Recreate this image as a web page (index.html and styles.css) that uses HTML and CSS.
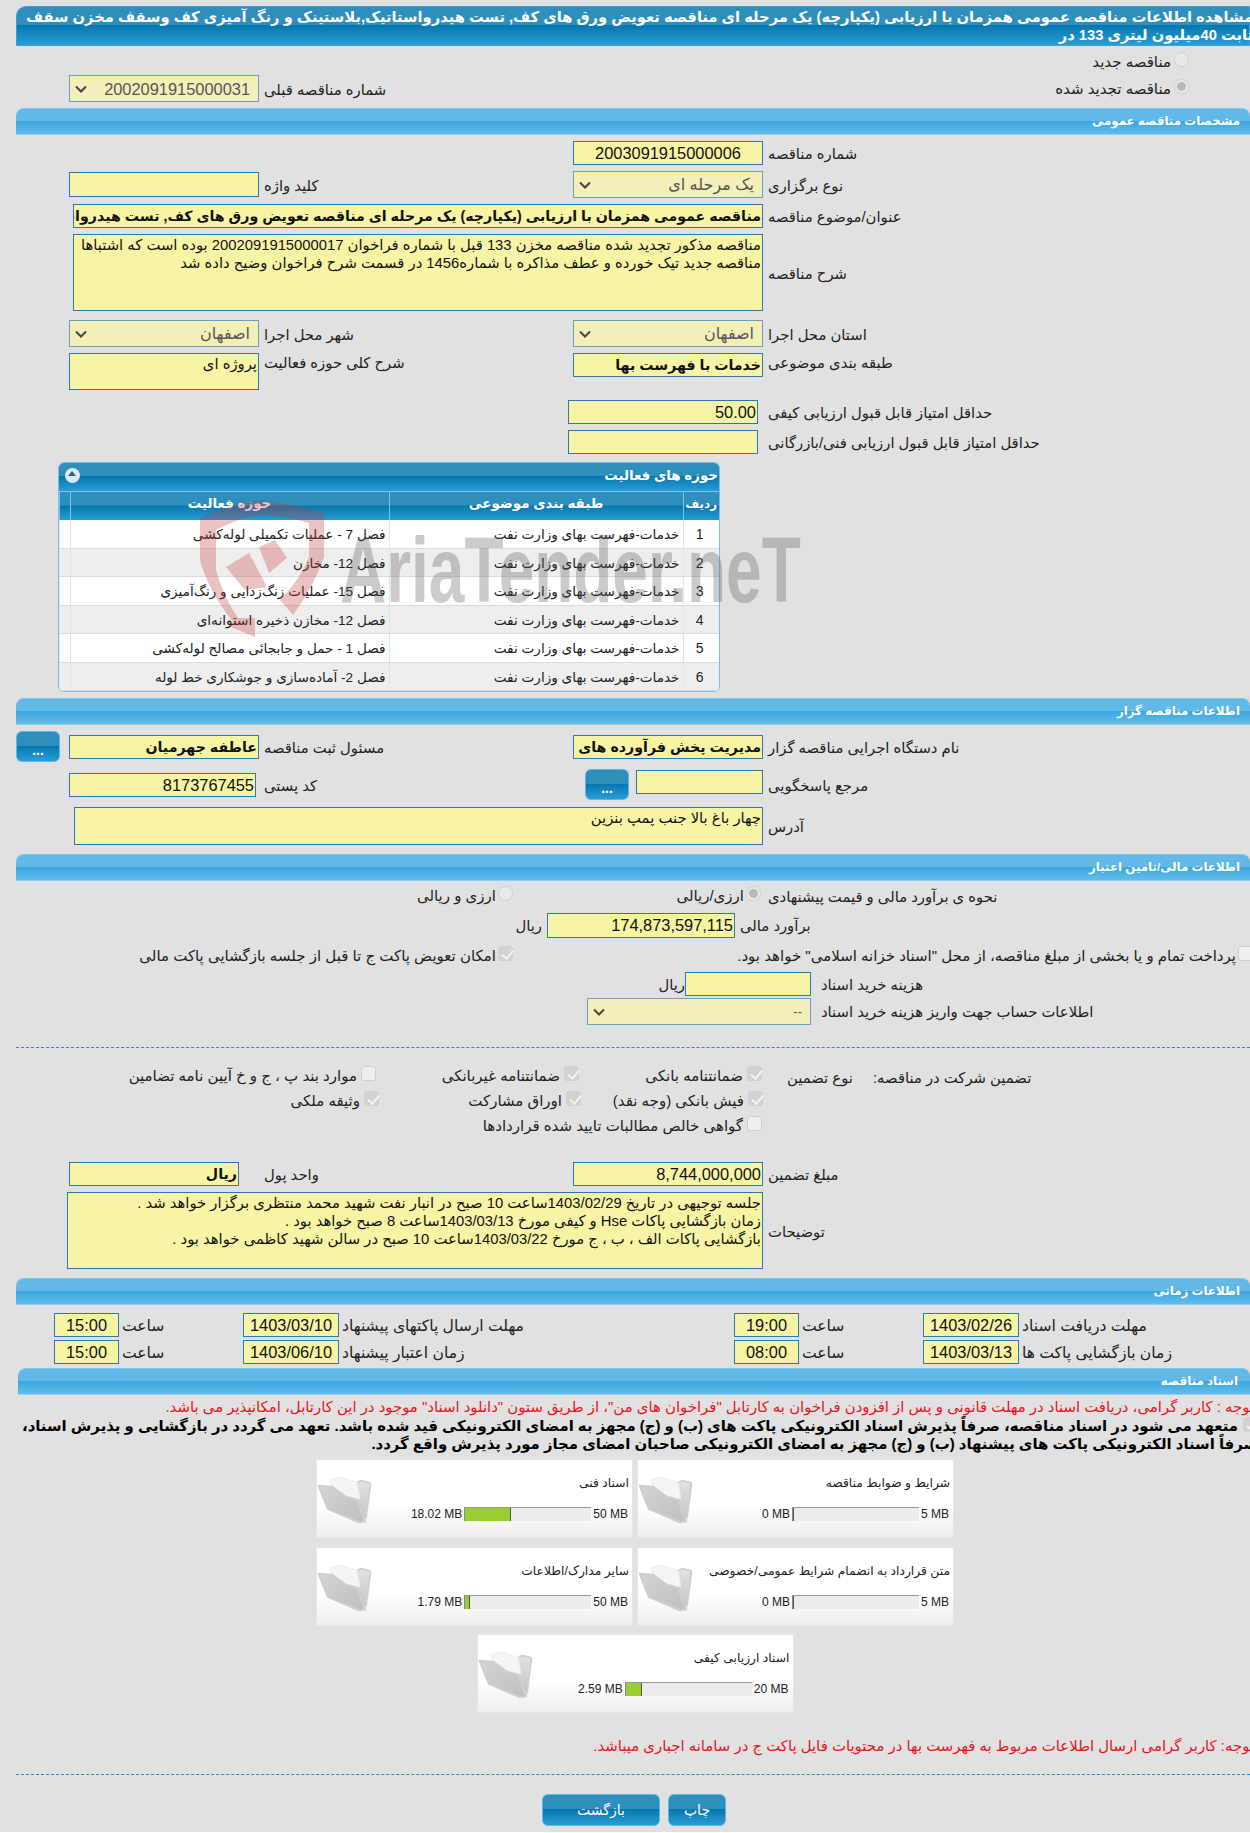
FILE: index.html
```html
<!DOCTYPE html>
<html lang="fa">

<head>
    <meta charset="UTF-8">
    <title>مشاهده اطلاعات مناقصه</title>

    <link rel="stylesheet" href="styles.css">

</head>

<body>

    <svg class="defs" width="0" height="0">
        <defs>
            <linearGradient id="folderBack" x1="0" y1="0" x2="0" y2="1">
                <stop offset="0" stop-color="#e2e2e2" />
                <stop offset="1" stop-color="#c6c6c6" />
            </linearGradient>
            <linearGradient id="folderFront" x1="0" y1="0" x2="1" y2="1">
                <stop offset="0" stop-color="#d4d4d4" />
                <stop offset="1" stop-color="#bfbfbf" />
            </linearGradient>
            <symbol id="folder" viewBox="0 0 70 60">
                <g transform="translate(0 0.8) scale(1 0.885)">
                    <path d="M40 15 L46 11 L54 13 Q56 14 55 18 L51 53 L44 50 Z" fill="url(#folderBack)" stroke="#d0d0d0" stroke-width="2" stroke-linejoin="round" />
                    <path d="M15 10 L25 7 L42 13 L45 32 L30 28 L17 18 Z" fill="#f5f5f5" stroke="#ececec" stroke-linejoin="round" />
                    <path d="M4 17 L17 18 L30 29 L42 33 L50 57 L44 58 L13 43 Z" fill="url(#folderFront)" stroke="#cecece" stroke-width="2.5" stroke-linejoin="round" />
                </g>
            </symbol>
            <symbol id="chevron" viewBox="0 0 12 8">
                <path d="M1 1.5 L6 6.5 L11 1.5" fill="none" stroke="#444" stroke-width="2" />
            </symbol>
        </defs>
    </svg>

    <div class="page">

        <h1 class="title"><span>مشاهده اطلاعات مناقصه عمومی همزمان با ارزیابی (یکپارچه) یک مرحله ای مناقصه تعویض ورق های کف, تست هیدرواستاتیک,بلاستینک و رنگ آمیزی کف وسقف مخزن سقف<br>ثابت 40میلیون لیتری 133 در</span></h1>

        <div class="row top-radio">
            <div class="opt col5"><i class="radio"></i><label>مناقصه جدید</label></div>
        </div>
        <div class="row mt3">
            <div class="field select col2"><svg><use href="#chevron" /></svg><span class="num">2002091915000031</span></div>
            <div class="label col3">شماره مناقصه قبلی</div>
            <div class="opt col5"><i class="radio on"></i><label>مناقصه تجدید شده</label></div>
        </div>

        <div class="bar">مشخصات مناقصه عمومی</div>

        <div class="row">
            <div class="field col4 center num">2003091915000006</div>
            <div class="label col5">شماره مناقصه</div>
        </div>
        <div class="row">
            <div class="field col2 low"></div>
            <div class="label col3">کلید واژه</div>
            <div class="field select col4"><svg><use href="#chevron" /></svg><span>یک مرحله ای</span></div>
            <div class="label col5">نوع برگزاری</div>
        </div>
        <div class="row">
            <div class="field wide bold">مناقصه عمومی همزمان با ارزیابی (یکپارچه) یک مرحله ای مناقصه تعویض ورق های کف, تست هیدرواستاتیک,بلاستینک و رنگ آمیزی کف وسقف مخزن</div>
            <div class="label col5">عنوان/موضوع مناقصه</div>
        </div>
        <div class="row">
            <div class="field area wide desc">مناقصه مذکور تجدید شده مناقصه مخزن 133 قبل با شماره فراخوان 2002091915000017 بوده است که اشتباها<br>مناقصه جدید تیک خورده و عطف مذاکره با شماره1456 در قسمت شرح فراخوان وضیح داده شد</div>
            <div class="label col5">شرح مناقصه</div>
        </div>
        <div class="row mt9">
            <div class="field select col2"><svg><use href="#chevron" /></svg><span>اصفهان</span></div>
            <div class="label col3">شهر محل اجرا</div>
            <div class="field select col4"><svg><use href="#chevron" /></svg><span>اصفهان</span></div>
            <div class="label col5">استان محل اجرا</div>
        </div>
        <div class="row row-top">
            <div class="field area col2 short">پروژه ای</div>
            <div class="label col3">شرح کلی حوزه فعالیت</div>
            <div class="field col4 bold">خدمات با فهرست بها</div>
            <div class="label col5">طبقه بندی موضوعی</div>
        </div>
        <div class="row score mt10">
            <div class="field col2 num">50.00</div>
            <div class="label col3">حداقل امتیاز قابل قبول ارزیابی کیفی</div>
        </div>
        <div class="row score">
            <div class="field col2"></div>
            <div class="label col3">حداقل امتیاز قابل قبول ارزیابی فنی/بازرگانی</div>
        </div>

        <section class="panel">
            <div class="panel-head">
                <span>حوزه های فعالیت</span>
                <i class="collapse"></i>
            </div>
            <table>
                <colgroup>
                    <col class="c-radif">
                    <col class="c-tabaghe">
                    <col class="c-hoze">
                    <col>
                </colgroup>
                <thead>
                    <tr>
                        <th>ردیف</th>
                        <th>طبقه بندی موضوعی</th>
                        <th>حوزه فعالیت</th>
                        <th></th>
                    </tr>
                </thead>
                <tbody>
                    <tr>
                        <td class="n">1</td>
                        <td>خدمات-فهرست بهای وزارت نفت</td>
                        <td>فصل 7 - عملیات تکمیلی لوله‌کشی</td>
                        <td></td>
                    </tr>
                    <tr>
                        <td class="n">2</td>
                        <td>خدمات-فهرست بهای وزارت نفت</td>
                        <td>فصل 12- مخازن</td>
                        <td></td>
                    </tr>
                    <tr>
                        <td class="n">3</td>
                        <td>خدمات-فهرست بهای وزارت نفت</td>
                        <td>فصل 15- عملیات زنگ‌زدایی و رنگ‌آمیزی</td>
                        <td></td>
                    </tr>
                    <tr>
                        <td class="n">4</td>
                        <td>خدمات-فهرست بهای وزارت نفت</td>
                        <td>فصل 12- مخازن ذخیره استوانه‌ای</td>
                        <td></td>
                    </tr>
                    <tr>
                        <td class="n">5</td>
                        <td>خدمات-فهرست بهای وزارت نفت</td>
                        <td>فصل 1 - حمل و جابجائی مصالح لوله‌کشی</td>
                        <td></td>
                    </tr>
                    <tr>
                        <td class="n">6</td>
                        <td>خدمات-فهرست بهای وزارت نفت</td>
                        <td>فصل 2- آماده‌سازی و جوشکاری خط لوله</td>
                        <td></td>
                    </tr>
                </tbody>
            </table>
        </section>

        <div class="bar mt6">اطلاعات مناقصه گزار</div>

        <div class="row mt6">
            <button class="btn btn-more col1">...</button>
            <div class="field col2 bold">عاطفه جهرمیان</div>
            <div class="label col3">مسئول ثبت مناقصه</div>
            <div class="field col4 bold">مدیریت پخش فرآورده های نفتی اصفهان</div>
            <div class="label col5">نام دستگاه اجرایی مناقصه گزار</div>
        </div>
        <div class="row mt7">
            <div class="field col2 w186 num">8173767455</div>
            <div class="label col3">کد پستی</div>
            <div class="ref col4">
                <button class="btn btn-more">...</button>
                <div class="field"></div>
            </div>
            <div class="label col5">مرجع پاسخگویی</div>
        </div>
        <div class="row mt7">
            <div class="field area wide addr">چهار باغ بالا جنب پمپ بنزین</div>
            <div class="label col5">آدرس</div>
        </div>

        <div class="bar mt9">اطلاعات مالی/تامین اعتبار</div>

        <div class="fin fin-opts">
            <div class="opt"><i class="radio"></i><label>ارزی و ریالی</label></div>
            <div class="opt"><i class="radio on"></i><label>ارزی/ریالی</label></div>
            <div class="label">نحوه ی برآورد مالی و قیمت پیشنهادی</div>
        </div>
        <div class="fin fin-budget">
            <div class="label unit">ریال</div>
            <div class="field num">174,873,597,115</div>
            <div class="label">برآورد مالی</div>
        </div>
        <div class="fin fin-checks">
            <div class="opt"><i class="check on"></i><label>امکان تعویض پاکت ج تا قبل از جلسه بازگشایی پاکت مالی</label></div>
            <div class="opt treasury"><i class="check"></i><label>پرداخت تمام و یا بخشی از مبلغ مناقصه، از محل "اسناد خزانه اسلامی" خواهد بود.</label></div>
        </div>
        <div class="fin fin-cost">
            <div class="label unit">ریال</div>
            <div class="field"></div>
            <div class="label">هزینه خرید اسناد</div>
        </div>
        <div class="fin fin-account">
            <div></div>
            <div class="field select"><svg><use href="#chevron" /></svg><span class="small">--</span></div>
            <div class="label">اطلاعات حساب جهت واریز هزینه خرید اسناد</div>
        </div>

        <hr class="dash mt22">

        <div class="guar first">
            <div class="opt"><i class="check"></i><label>موارد بند پ ، ج و خ آیین نامه تضامین</label></div>
            <div class="opt"><i class="check on"></i><label>ضمانتنامه غیربانکی</label></div>
            <div class="opt"><i class="check on"></i><label>ضمانتنامه بانکی</label></div>
            <div class="label type">نوع تضمین</div>
            <div class="label">تضمین شرکت در مناقصه:</div>
        </div>
        <div class="guar second">
            <div class="opt"><i class="check on"></i><label>وثیقه ملکی</label></div>
            <div class="opt"><i class="check on"></i><label>اوراق مشارکت</label></div>
            <div class="opt"><i class="check on"></i><label>فیش بانکی (وجه نقد)</label></div>
        </div>
        <div class="guar last">
            <div class="opt"><i class="check"></i><label>گواهی خالص مطالبات تایید شده قراردادها</label></div>
        </div>

        <div class="row mt22">
            <div class="field col2 w170 bold">ریال</div>
            <div class="label col3">واحد پول</div>
            <div class="field col4 num tight">8,744,000,000</div>
            <div class="label col5">مبلغ تضمین</div>
        </div>
        <div class="row">
            <div class="field area wide notes">جلسه توجیهی در تاریخ 1403/02/29ساعت 10 صبح در انبار نفت شهید محمد منتظری برگزار خواهد شد .<br>زمان بازگشایی پاکات Hse و کیفی مورخ 1403/03/13ساعت 8 صبح خواهد بود .<br>بازگشایی پاکات الف ، ب ، ج مورخ 1403/03/22ساعت 10 صبح در سالن شهید کاظمی خواهد بود .</div>
            <div class="label col5">توضیحات</div>
        </div>

        <div class="bar mt9">اطلاعات زمانی</div>

        <div class="times mt8">
            <div class="field center num t1">15:00</div>
            <div class="label">ساعت</div>
            <div class="field center num">1403/03/10</div>
            <div class="label">مهلت ارسال پاکتهای پیشنهاد</div>
            <div class="field center num t1">19:00</div>
            <div class="label">ساعت</div>
            <div class="field center num">1403/02/26</div>
            <div class="label">مهلت دریافت اسناد</div>
        </div>
        <div class="times mt3">
            <div class="field center num t1">15:00</div>
            <div class="label">ساعت</div>
            <div class="field center num">1403/06/10</div>
            <div class="label">زمان اعتبار پیشنهاد</div>
            <div class="field center num t1">08:00</div>
            <div class="label">ساعت</div>
            <div class="field center num">1403/03/13</div>
            <div class="label">زمان بازگشایی پاکت ها</div>
        </div>

        <div class="bar bar-docs">اسناد مناقصه</div>

        <p class="notice">توجه : کاربر گرامی، دریافت اسناد در مهلت قانونی و پس از افزودن فراخوان به کارتابل "فراخوان های من"، از طریق ستون "دانلود اسناد" موجود در این کارتابل، امکانپذیر می باشد.</p>

        <div class="pledge">
            <i class="check on"></i>
            <p>متعهد می شود در اسناد مناقصه، صرفاً پذیرش اسناد الکترونیکی پاکت های (ب) و (ج) مجهز به امضای الکترونیکی قید شده باشد. تعهد می گردد در بازگشایی و پذیرش اسناد،<br>صرفاً اسناد الکترونیکی پاکت های پیشنهاد (ب) و (ج) مجهز به امضای الکترونیکی صاحبان امضای مجاز مورد پذیرش واقع گردد.</p>
        </div>

        <div class="cards">
            <article class="card">
                <svg class="folder"><use href="#folder" /></svg>
                <div class="card-body">
                    <h3>اسناد فنی</h3>
                    <div class="usage"><span>18.02 MB</span><div class="meter"><b style="width:46px"></b></div><span>50 MB</span></div>
                </div>
            </article>
            <article class="card">
                <svg class="folder"><use href="#folder" /></svg>
                <div class="card-body">
                    <h3>شرایط و ضوابط مناقصه</h3>
                    <div class="usage"><span>0 MB</span><div class="meter"><b style="width:0"></b></div><span>5 MB</span></div>
                </div>
            </article>
            <article class="card">
                <svg class="folder"><use href="#folder" /></svg>
                <div class="card-body">
                    <h3>سایر مدارک/اطلاعات</h3>
                    <div class="usage"><span>1.79 MB</span><div class="meter"><b style="width:5px"></b></div><span>50 MB</span></div>
                </div>
            </article>
            <article class="card">
                <svg class="folder"><use href="#folder" /></svg>
                <div class="card-body">
                    <h3>متن قرارداد به انضمام شرایط عمومی/خصوصی</h3>
                    <div class="usage"><span>0 MB</span><div class="meter"><b style="width:0"></b></div><span>5 MB</span></div>
                </div>
            </article>
            <article class="card">
                <svg class="folder"><use href="#folder" /></svg>
                <div class="card-body">
                    <h3>اسناد ارزیابی کیفی</h3>
                    <div class="usage"><span>2.59 MB</span><div class="meter"><b style="width:16px"></b></div><span>20 MB</span></div>
                </div>
            </article>
        </div>

        <p class="notice notice-2">توجه: کاربر گرامی ارسال اطلاعات مربوط به فهرست بها در محتویات فایل پاکت ج در سامانه اجباری میباشد.</p>

        <hr class="dash mt18">

        <div class="actions">
            <button class="btn btn-back">بازگشت</button>
            <button class="btn btn-print">چاپ</button>
        </div>

        <!-- watermark over the table -->
        <div class="watermark">
            <svg viewBox="0 0 125 138" width="125" height="138">
                <path d="M0 18 Q30 4 61 0 Q95 4 124 13 L124 57 Q112 90 93 115 L80 100 Q100 80 109 57 L109 23 Q85 16 61 15 Q38 18 16 30 L16 70 Q24 98 38 118 L55 118 L55 137 L31 127 L33 122 Q8 90 0 60 Z" fill="#c43a3a" />
                <path d="M26 67 L49 53 L67 87 L45 90 Z M59 47 L75 40 L87 58 L69 73 Z" fill="#c43a3a" />
            </svg>
            <span>AriaTender.neT</span>
        </div>

    </div>

</body>

</html>
```

FILE: styles.css
```css
* {
    box-sizing: border-box;
}

html,
body {
    margin: 0;
    background: #fff;
}

body {
    font-family: "Liberation Sans", "DejaVu Sans", sans-serif;
    font-size: 13px;
    color: #222;
}

.defs {
    position: absolute;
}

.page {
    position: relative;
    height: 1832px;
    padding: 6px 0 0 16px;
    overflow: hidden;
    background: #e1e1e1;
}

/* title and section bars */
.title {
    height: 40px;
    margin: 0;
    border: 1px solid #3a9fdc;
    border-radius: 10px 0 0 0;
    background: linear-gradient(#2e8fbd 0, #2e8fbd 48%, #0676ae 48%, #2a9cd6 100%);
    color: #fff;
    font-size: 14.7px;
    font-weight: bold;
    line-height: 18px;
    direction: rtl;
    white-space: nowrap;
}

.title span {
    display: block;
    margin-right: -4px;
    padding-top: 1px;
}

.bar {
    height: 27px;
    margin-top: 6px;
    padding-right: 10px;
    border-top: 1px solid #7cc7ef;
    border-bottom: 1px solid #8fd0f0;
    border-radius: 8px 8px 0 0;
    background: linear-gradient(#62b9e8 0, #62b9e8 48%, #3aa6dd 48%, #62bce9 100%);
    color: #fff;
    font-size: 11.8px;
    font-weight: bold;
    line-height: 25px;
    direction: rtl;
}

.bar-docs {
    margin: 4px 0 0 2px;
    padding-right: 12px;
}

/* form rows */
.row {
    display: grid;
    grid-template-columns: 53px 190px 314px 190px 1fr;
    align-items: center;
    margin-top: 6px;
}

.row-top {
    align-items: start;
}

.score {
    grid-template-columns: 552px 190px 1fr;
}

.score .label {
    padding-left: 10px;
}

.top-radio {
    height: 20px;
}

.col1 {
    grid-column: 1;
}

.col2 {
    grid-column: 2;
}

.col3 {
    grid-column: 3;
}

.col4 {
    grid-column: 4;
}

.col5 {
    grid-column: 5;
}

.mt3 {
    margin-top: 3px;
}

.mt6 {
    margin-top: 6px;
}

.mt7 {
    margin-top: 7px;
}

.mt8 {
    margin-top: 8px;
}

.mt9 {
    margin-top: 9px;
}

.mt10 {
    margin-top: 10px;
}

.mt18 {
    margin-top: 18px;
}

.mt22 {
    margin-top: 22px;
}

.label {
    padding: 1px 0 0 5px;
    font-size: 14.8px;
    white-space: nowrap;
    direction: rtl;
    text-align: left;
}

.field {
    height: 24px;
    padding: 0 1px;
    overflow: hidden;
    border: 1px solid #2a79b0;
    background: #f7f5a5;
    color: #111;
    font-size: 13px;
    line-height: 22px;
    direction: rtl;
    white-space: nowrap;
}

.low {
    height: 25px;
}

.num {
    font-size: 16.4px;
}

.center {
    text-align: center;
}

.bold {
    font-size: 14.2px;
    font-weight: bold;
}

.w186 {
    width: 187px;
}

.w170 {
    width: 170px;
}

.wide {
    grid-column: 2 / 5;
    justify-self: end;
    width: 690px;
}

.addr {
    width: 689px;
    height: 38px;
}

.notes {
    width: 696px;
}

.area {
    height: 77px;
    padding: 1px;
    font-size: 14.8px;
    line-height: 18px;
    white-space: normal;
}

.short {
    height: 37px;
}

.area.addr {
    height: 38px;
    white-space: nowrap;
}

.area.notes,
.area.desc {
    white-space: nowrap;
}

.select {
    display: flex;
    align-items: center;
    justify-content: space-between;
    height: 27px;
    padding: 0 8px 0 5px;
    border-color: #6a9fc0;
    background: #f2efb8;
    color: #555;
    direction: ltr;
    font-size: 16px;
}

.select svg {
    width: 12px;
    height: 8px;
}

.select span {
    direction: rtl;
}

.select .small {
    font-size: 13px;
}

.ref {
    display: flex;
    align-items: flex-start;
    justify-content: flex-end;
}

.ref .field {
    width: 127px;
    height: 24px;
    margin: 1px 0 0 7px;
}

.ref .btn-more {
    margin-left: 11px;
}

/* radio and checkbox look, they are all disabled on this page */
.opt {
    display: flex;
    align-items: flex-start;
    gap: 2px;
    direction: rtl;
    white-space: nowrap;
    font-size: 15px;
    line-height: 20px;
}

.col5.opt {
    justify-self: end;
    margin-right: 61px;
    gap: 3px;
}

.radio,
.check {
    flex: none;
    display: block;
    width: 15px;
    height: 15px;
    margin-top: 0;
    border: 1px solid #cfcfcf;
    background: #e9e9e9;
}

.radio {
    position: relative;
    border-radius: 50%;
}

.radio.on::after {
    content: "";
    position: absolute;
    left: 2px;
    top: 2px;
    width: 9px;
    height: 9px;
    border-radius: 50%;
    background: #b9b9b9;
}

.check {
    position: relative;
    border-radius: 3px;
    background: #efefef;
}

.check.on {
    border-color: #d0d0d0;
    background: #d2d2d2;
}

.check.on::after {
    content: "";
    position: absolute;
    left: 5px;
    top: 1px;
    width: 5px;
    height: 9px;
    border: solid #f4f4f4;
    border-width: 0 2px 2px 0;
    transform: rotate(40deg);
}

/* financial rows */
.fin {
    display: grid;
    align-items: center;
}

.fin .label {
    padding-top: 0;
}

.fin-opts {
    grid-template-columns: 497px 248px 1fr;
    height: 22px;
    margin-top: 4px;
}

.fin-opts .label {
    padding-left: 7px;
}

.fin-opts .opt {
    justify-self: end;
}

.fin-budget {
    grid-template-columns: 531px 188px 1fr;
    margin-top: 6px;
}

.fin-budget .field {
    height: 25px;
    padding-left: 4px;
    direction: ltr;
    text-align: right;
}

.unit {
    padding: 0 5px 0 0;
    text-align: right;
    justify-self: end;
}

.fin-checks {
    grid-template-columns: 497px 1fr;
    height: 20px;
    margin-top: 8px;
    margin-bottom: 1px;
}

.fin-checks .opt {
    justify-self: end;
}

.fin-checks .treasury {
    margin-right: -3px;
}

.fin-cost {
    grid-template-columns: 669px 126px 1fr;
    margin-top: 6px;
}

.fin-cost .unit {
    padding-right: 0;
}

.fin-cost .label:last-child,
.fin-account .label {
    padding-left: 10px;
}

.fin-account {
    grid-template-columns: 571px 224px 1fr;
    margin-top: 2px;
}

.dash {
    height: 0;
    margin-bottom: 0;
    margin-left: 0;
    margin-right: 0;
    border: 0;
    border-top: 1px dashed #2a8cc0;
}

/* guarantee options */
.guar {
    display: grid;
    grid-template-columns: 360px 203px 183px 111px 1fr;
    height: 25px;
}

.guar .opt {
    justify-self: end;
    gap: 4px;
}

.first {
    margin-top: 18px;
}

.second {
    grid-template-columns: 363px 202px 182px;
}

.last {
    grid-template-columns: 746px;
    margin-bottom: -1px;
}

.type {
    padding: 3px 0 0 25px;
}

.guar .label:last-child {
    padding: 3px 0 0 0;
}

.tight {
    padding-left: 1px;
}

/* time rows */
.times {
    display: grid;
    grid-template-columns: 65px 124px 96px 395px 65px 124px 96px 1fr;
    align-items: center;
    margin-left: 38px;
}

.times .field {
    height: 24px;
}

.times .label {
    padding: 2px 0 0 3px;
    font-size: 15.6px;
}

/* activity table */
.panel {
    width: 662px;
    margin: 8px 0 0 42px;
    overflow: hidden;
    border: 1px solid #7cbde3;
    border-radius: 6px;
    background: #fff;
}

.panel-head {
    display: flex;
    align-items: center;
    justify-content: space-between;
    height: 28px;
    padding: 0 1px 3px 6px;
    background: linear-gradient(#2e8fbd 0, #2e8fbd 48%, #0676ae 48%, #2a9cd6 100%);
    color: #fff;
    font-size: 13.4px;
    font-weight: bold;
    direction: rtl;
}

.collapse {
    position: relative;
    display: block;
    width: 15px;
    height: 15px;
    border-radius: 50%;
    background: #dfe9f2;
}

.collapse::after {
    content: "";
    position: absolute;
    left: 3px;
    top: 3px;
    border: 4.5px solid transparent;
    border-top: 0;
    border-bottom: 5px solid #0f6aa0;
}

table {
    width: 100%;
    border-collapse: collapse;
    table-layout: fixed;
    direction: rtl;
}

.c-radif {
    width: 36px;
}

.c-tabaghe {
    width: 294px;
}

.c-hoze {
    width: 319px;
}

th {
    height: 28px;
    padding: 0 0 4px;
    border-left: 1px solid #7cc4ec;
    border-top: 1px solid #7cc4ec;
    background: linear-gradient(#2e8fbd 0, #2e8fbd 48%, #0676ae 48%, #2a9cd6 100%);
    color: #fff;
    font-size: 13.4px;
    font-weight: bold;
}

th:first-child {
    font-size: 12px;
}

td {
    height: 28px;
    padding: 0 3px 0 0;
    border-bottom: 1px solid #dcdcdc;
    border-left: 1px solid #e4e4e4;
    font-size: 13.6px;
    white-space: nowrap;
}

tbody tr:nth-child(odd) td {
    height: 29px;
}

td.n {
    font-size: 14px;
    text-align: center;
}

tbody tr:nth-child(even) {
    background: #eee;
}

/* document cards */
.notice {
    height: 20px;
    margin: 2px -4px 0 0;
    color: #e8141c;
    font-size: 14.9px;
    line-height: 20px;
    direction: rtl;
    white-space: nowrap;
}

.notice-2 {
    margin-top: 23px;
}

.pledge {
    height: 42px;
    margin-right: -8px;
    color: #000;
    font-size: 14.9px;
    font-weight: bold;
    line-height: 18px;
    direction: rtl;
}

.pledge p {
    margin: 0;
    white-space: nowrap;
}

.pledge .check {
    float: right;
    margin: 0 0 0 5px;
}

.cards {
    display: flex;
    flex-wrap: wrap;
    justify-content: center;
    gap: 8.5px 4px;
    width: 638px;
    margin-left: 300px;
}

.card {
    display: flex;
    width: 317px;
    height: 79px;
    border: 1px solid #e6e6e6;
    background: linear-gradient(#fff 60%, #eee 100%);
}

.folder {
    flex: none;
    width: 70px;
    height: 60px;
    margin: 10px 2px 0 -2px;
}

.card-body {
    flex: 1;
    min-width: 0;
}

.card h3 {
    margin: 14px 3px 0 0;
    font-size: 12.3px;
    font-weight: normal;
    line-height: 18px;
    direction: rtl;
    white-space: nowrap;
}

.usage {
    display: flex;
    justify-content: flex-end;
    align-items: center;
    gap: 2px;
    margin: 15px 4px 0 0;
    font-size: 12px;
}

.meter {
    width: 127px;
    height: 14px;
    border-top: 1px solid #999;
    border-left: 1px solid #888;
    background: #ececec;
}

.meter b {
    display: block;
    height: 13px;
    border-right: 1px solid #555;
    background: #9acd32;
}

/* bottom buttons */
.btn {
    padding: 0;
    border: 1px solid #58b8e6;
    border-radius: 6px;
    background: linear-gradient(#2e8fbd 0, #2e8fbd 48%, #0676ae 48%, #2a9cd6 100%);
    color: #fff;
    font-family: inherit;
    font-size: 14px;
}

.btn-more {
    width: 44px;
    height: 31px;
    font-weight: bold;
    padding-top: 6px;
}

.actions {
    display: flex;
    gap: 8px;
    margin: 19px 0 0 526px;
}

.btn-back {
    width: 118px;
    height: 32px;
}

.btn-print {
    width: 58px;
    height: 32px;
}

.watermark {
    position: absolute;
    left: 200px;
    top: 500px;
    width: 620px;
    height: 140px;
    opacity: 0.3;
    pointer-events: none;
}

.watermark span {
    position: absolute;
    left: 140px;
    top: 20px;
    color: #555;
    font-size: 92px;
    font-weight: bold;
    line-height: 100px;
    white-space: nowrap;
    transform: scaleX(0.695);
    transform-origin: left top;
}
```
